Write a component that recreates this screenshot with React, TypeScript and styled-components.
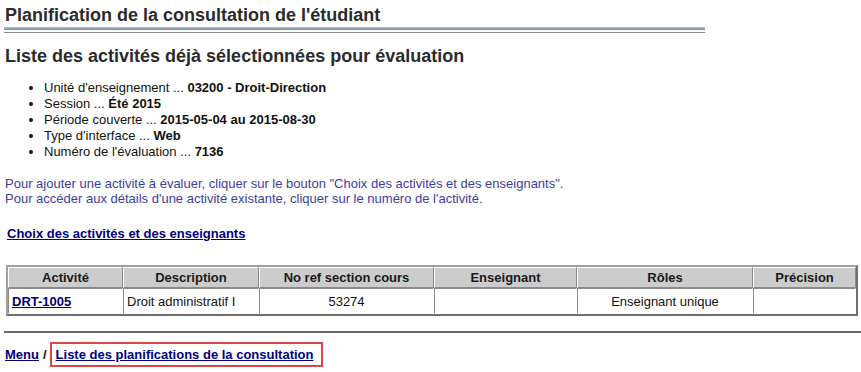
import styled, { createGlobalStyle } from "styled-components";

const GlobalStyle = createGlobalStyle`
  html, body {
    margin: 0;
    padding: 0;
    background: #ffffff;
  }
  body {
    font-family: "Liberation Sans", Arial, sans-serif;
    font-size: 13px;
    color: #111;
  }
`;

const details = [
  { label: "Unité d'enseignement", value: "03200 - Droit-Direction" },
  { label: "Session", value: "Été 2015" },
  { label: "Période couverte", value: "2015-05-04 au 2015-08-30" },
  { label: "Type d'interface", value: "Web" },
  { label: "Numéro de l'évaluation", value: "7136" },
];

const columns = [
  { title: "Activité", width: 115 },
  { title: "Description", width: 136 },
  { title: "No ref section cours", width: 175 },
  { title: "Enseignant", width: 143 },
  { title: "Rôles", width: 176 },
  { title: "Précision", width: 103 },
];

const App = () => {
  return (
    <Page>
      <GlobalStyle />
      <TitleBlock>
        <Title>Planification de la consultation de l'étudiant</Title>
        <TitleRule />
      </TitleBlock>
      <SubTitle>Liste des activités déjà sélectionnées pour évaluation</SubTitle>
      <InfoList>
        {details.map((d) => (
          <li key={d.label}>
            {d.label} ... <b>{d.value}</b>
          </li>
        ))}
      </InfoList>
      <Help>
        Pour ajouter une activité à évaluer, cliquer sur le bouton "Choix des
        activités et des enseignants".
        <br />
        Pour accéder aux détails d'une activité existante, cliquer sur le
        numéro de l'activité.
      </Help>
      <ChoiceLink href="#">Choix des activités et des enseignants</ChoiceLink>
      <Table>
        <colgroup>
          {columns.map((c) => (
            <col key={c.title} style={{ width: c.width }} />
          ))}
        </colgroup>
        <thead>
          <tr>
            {columns.map((c) => (
              <Th key={c.title}>{c.title}</Th>
            ))}
          </tr>
        </thead>
        <tbody>
          <tr>
            <Td>
              <CellLink href="#">DRT-1005</CellLink>
            </Td>
            <Td>Droit administratif I</Td>
            <Td $center>53274</Td>
            <Td></Td>
            <Td $center>Enseignant unique</Td>
            <Td></Td>
          </tr>
        </tbody>
      </Table>
      <Rule />
      <Breadcrumb>
        <NavLink href="#">Menu</NavLink>
        <Sep>/</Sep>
        <Highlight>
          <NavLink href="#">Liste des planifications de la consultation</NavLink>
        </Highlight>
      </Breadcrumb>
    </Page>
  );
};

const Page = styled.div`
  width: 861px;
  height: 372px;
  padding: 4px 0 0 5px;
  box-sizing: border-box;
  overflow: hidden;
`;

const TitleBlock = styled.div`
  width: 700px;
`;

const Title = styled.h1`
  margin: 0;
  font-size: 18px;
  line-height: 22px;
  font-weight: bold;
  color: #2b2b2b;
`;

const TitleRule = styled.div`
  margin: 1px 0 0 -1px;
  height: 3px;
  background: linear-gradient(#b4c6d8, #6e89a8);
  border-bottom: 2px solid #ffffff;
  box-shadow: 0 1px 0 #8a8a8a;
`;

const SubTitle = styled.h2`
  margin: 13px 0 0 0;
  font-size: 18px;
  line-height: 22px;
  font-weight: bold;
  color: #2b2b2b;
`;

const InfoList = styled.ul`
  margin: 13px 0 0 0;
  padding-left: 39px;
  li {
    line-height: 16px;
    font-size: 13px;
    color: #111;
  }
`;

const Help = styled.p`
  margin: 16px 0 0 0;
  color: #3d3d9a;
  font-size: 13px;
  line-height: 15px;
`;

const ChoiceLink = styled.a`
  display: inline-block;
  margin: 20px 0 0 2px;
  font-weight: bold;
  font-size: 13px;
  line-height: 15px;
  color: #000080;
`;

const Table = styled.table`
  margin: 24px 0 0 1px;
  width: 851px;
  table-layout: fixed;
  border-collapse: separate;
  border-spacing: 0;
  border: 2px solid;
  border-color: #a0a0a0 #707070 #707070 #a0a0a0;
`;

const Th = styled.th`
  background: #cccccc;
  height: 19px;
  padding: 0 2px;
  font-size: 13px;
  font-weight: bold;
  color: #1a1a1a;
  text-align: center;
  border: 1px solid;
  border-color: #ffffff #8a8a8a #8a8a8a #ffffff;
`;

const Td = styled.td<{ $center?: boolean }>`
  height: 24px;
  padding: 0 3px;
  font-size: 13px;
  color: #111;
  text-align: ${(p) => (p.$center ? "center" : "left")};
  border: 1px solid;
  border-color: #8a8a8a #ffffff #ffffff #8a8a8a;
`;

const CellLink = styled.a`
  font-weight: bold;
  color: #000080;
`;

const Rule = styled.hr`
  margin: 15px 0 0 -1px;
  border: none;
  height: 2px;
  background: #6a6a6a;
`;

const Breadcrumb = styled.div`
  margin-top: 9px;
  display: flex;
  align-items: center;
  font-size: 13px;
  font-weight: bold;
`;

const Sep = styled.span`
  margin: 0 3px 0 4px;
  color: #111;
`;

const Highlight = styled.span`
  border: 2px solid #e04545;
  padding: 3px 8px 3px 4px;
  line-height: 15px;
`;

const NavLink = styled.a`
  font-weight: bold;
  color: #000080;
`;

export default App;
